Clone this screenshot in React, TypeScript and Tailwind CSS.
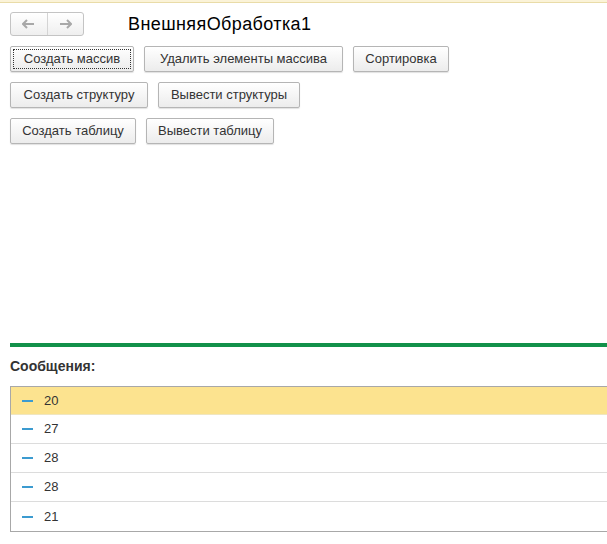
const buttonRows: { label: string; w: string }[][] = [
  [
    { label: "Создать массив", w: "w-[124px]" },
    { label: "Удалить элементы массива", w: "w-[199px]" },
    { label: "Сортировка", w: "w-[96px]" },
  ],
  [
    { label: "Создать структуру", w: "w-[138px]" },
    { label: "Вывести структуры", w: "w-[142px]" },
  ],
  [
    { label: "Создать таблицу", w: "w-[126px]" },
    { label: "Вывести таблицу", w: "w-[128px]" },
  ],
];

const messages = ["20", "27", "28", "28", "21"];

function Btn({ label, w, focused }: { label: string; w: string; focused?: boolean }) {
  return (
    <button
      className={`relative flex items-center justify-center h-[26px] ${w} rounded-[2px] border border-[#b5b5b5] bg-gradient-to-b from-white to-[#ececec] text-[13px] text-[#333] whitespace-nowrap shadow-[0_1px_1px_rgba(0,0,0,0.12)]`}
    >
      {focused && (
        <span className="absolute inset-[2px] border border-dotted border-[#333]" />
      )}
      {label}
    </button>
  );
}

export default function App() {
  return (
    <div
      className="w-[607px] h-[544px] bg-white overflow-hidden"
      style={{ fontFamily: '"Liberation Sans", Arial, sans-serif' }}
    >
      {/* top strip */}
      <div className="h-[3px] bg-[#fbf3d8] border-b border-[#e9dca8]" />

      <div className="flex flex-row items-center pt-[9px] pl-[10px]">
        <div className="flex flex-row h-[24px] w-[74px] rounded-[3px] border border-[#c4c4c4] bg-gradient-to-b from-white to-[#efefef]">
          <div className="flex-1 flex items-center justify-center border-r border-[#d4d4d4]">
            <svg width="13" height="10" viewBox="0 0 13 10">
              <path d="M1 5h11M5 1L1 5l4 4" stroke="#a8a8a8" strokeWidth="2" fill="none" />
            </svg>
          </div>
          <div className="flex-1 flex items-center justify-center">
            <svg width="13" height="10" viewBox="0 0 13 10">
              <path d="M1 5h11M8 1l4 4-4 4" stroke="#a8a8a8" strokeWidth="2" fill="none" />
            </svg>
          </div>
        </div>
        <p className="ml-[44px] text-[18px] tracking-[0.4px] text-black leading-none">ВнешняяОбработка1</p>
      </div>

      {/* buttons */}
      <div className="flex flex-col gap-[10px] mt-[10px] pl-[10px]">
        {buttonRows.map((row, i) => (
          <div key={i} className="flex flex-row gap-[10px]">
            {row.map((b, j) => (
              <Btn key={b.label} label={b.label} w={b.w} focused={i === 0 && j === 0} />
            ))}
          </div>
        ))}
      </div>

      {/* messages */}
      <div className="mt-[199px] ml-[10px] h-[4px] bg-[#12914a]" />
      <p className="ml-[10px] mt-[9px] text-[14px] font-bold text-[#333]">Сообщения:</p>
      <div className="ml-[10px] mt-[9px] border-t border-b border-l border-[#a8a8a8]">
        {messages.map((m, i) => (
          <div
            key={i}
            className={
              i === 0
                ? "flex flex-row items-center h-[28px] bg-[#fce38f] border-b border-[#f0e6c0]"
                : "flex flex-row items-center h-[29px] border-b border-[#dcdcdc] last:border-b-0"
            }
          >
            <span className="ml-[11px] w-[11px] h-[2px] bg-[#3c9bd0]" />
            <span className="ml-[11px] text-[13px] text-[#333]">{m}</span>
          </div>
        ))}
      </div>
    </div>
  );
}
